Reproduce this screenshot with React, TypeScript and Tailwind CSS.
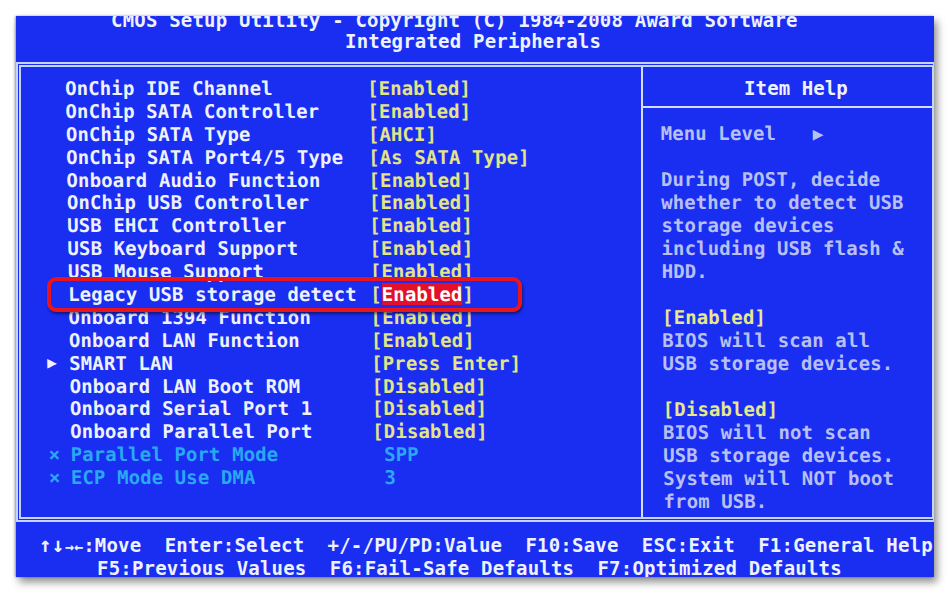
import React from "react";

type Row = { m?: string; l: string; v: string; dis?: boolean; hl?: boolean };

const rows: Row[] = [
  { l: "OnChip IDE Channel", v: "[Enabled]" },
  { l: "OnChip SATA Controller", v: "[Enabled]" },
  { l: "OnChip SATA Type", v: "[AHCI]" },
  { l: "OnChip SATA Port4/5 Type", v: "[As SATA Type]" },
  { l: "Onboard Audio Function", v: "[Enabled]" },
  { l: "OnChip USB Controller", v: "[Enabled]" },
  { l: "USB EHCI Controller", v: "[Enabled]" },
  { l: "USB Keyboard Support", v: "[Enabled]" },
  { l: "USB Mouse Support", v: "[Enabled]" },
  { l: "Legacy USB storage detect", v: "[Enabled]", hl: true },
  { l: "Onboard 1394 Function", v: "[Enabled]" },
  { l: "Onboard LAN Function", v: "[Enabled]" },
  { m: "▶", l: "SMART LAN", v: "[Press Enter]" },
  { l: "Onboard LAN Boot ROM", v: "[Disabled]" },
  { l: "Onboard Serial Port 1", v: "[Disabled]" },
  { l: "Onboard Parallel Port", v: "[Disabled]" },
  { m: "×", l: "Parallel Port Mode", v: " SPP", dis: true },
  { m: "×", l: "ECP Mode Use DMA", v: " 3", dis: true },
];

type HelpLine = { t: string; y?: boolean; arrow?: boolean };
const help: HelpLine[] = [
  { t: "Menu Level   ", arrow: true },
  { t: " " },
  { t: "During POST, decide" },
  { t: "whether to detect USB" },
  { t: "storage devices" },
  { t: "including USB flash &" },
  { t: "HDD." },
  { t: " " },
  { t: "[Enabled]", y: true },
  { t: "BIOS will scan all" },
  { t: "USB storage devices." },
  { t: " " },
  { t: "[Disabled]", y: true },
  { t: "BIOS will not scan" },
  { t: "USB storage devices." },
  { t: "System will NOT boot" },
  { t: "from USB." },
];

export default function App() {
  return (
    <div className="relative w-[950px] h-[593px] bg-white overflow-hidden font-['DejaVu_Sans_Mono',monospace] font-bold text-[19px] tracking-[0.1px]">
      <div className="ml-[16px] mt-[16px] w-[918px] h-[561px] bg-[#1a2ef2] flex flex-col overflow-hidden shadow-[3px_5px_8px_rgba(0,0,0,0.45),-1px_0_2px_rgba(0,0,0,0.35)]">
        {/* header */}
        <div className="h-[46px] shrink-0 overflow-hidden text-[#eef2ff] leading-[21px] whitespace-pre tracking-[0.2px]">
          <div className="-mt-[6px] pl-[95px]">CMOS Setup Utility - Copyright (C) 1984-2008 Award Software</div>
          <div className="pl-[329px]">Integrated Peripherals</div>
        </div>

        {/* main box */}
        <div className="h-[460px] shrink-0 flex border-double border-[#c4d4ff] border-t-[5px] border-b-[5px] border-l-[5px] border-r-2">
          {/* left panel */}
          <div className="w-[620px] pt-[10px] pl-[25px]">
            <div className="skew-x-[0.85deg] leading-[22.9px] whitespace-pre">
              {rows.map((r, i) => (
                <div key={i} className="flex h-[22.9px]">
                  <div className={`w-[22px] ${r.dis ? "text-[#2aa8f4]" : "text-[#eef2ff]"} ${r.m === "▶" ? "text-[16px]" : ""}`}>
                    {r.m ?? ""}
                  </div>
                  <div className={`w-[302px] ${r.dis ? "text-[#2aa8f4]" : "text-[#eef2ff]"}`}>{r.l}</div>
                  <div className={r.dis ? "text-[#2aa8f4]" : "text-[#e4e488]"}>
                    {r.hl ? (
                      <>
                        [<span className="bg-[#e3102a] text-white inline-block h-[22px] leading-[22px]">Enabled</span>]
                      </>
                    ) : (
                      r.v
                    )}
                  </div>
                </div>
              ))}
            </div>
          </div>
          {/* divider */}
          <div className="w-[2px] bg-[#d4defe]" />
          {/* right panel */}
          <div className="w-[289px] flex flex-col">
            <div className="h-[41px] pt-[10px] pl-[17px] text-center text-[#eef2ff] leading-[23px] border-b-2 border-[#d4defe]">
              Item Help
            </div>
            <div className="pt-[14px] pl-[19px] leading-[23px] whitespace-pre skew-x-[0.45deg]">
              {help.map((h, i) => (
                <div key={i} className={`h-[23px] ${h.y ? "text-[#e8e88c]" : "text-[#b8c0f2]"}`}>
                  {h.t}
                  {h.arrow ? <span className="text-[18px] leading-[0] pl-[2px]">▶</span> : null}
                </div>
              ))}
            </div>
          </div>
        </div>

        {/* footer */}
        <div className="h-[55px] shrink-0 pt-[12px] text-[#eef2ff] leading-[23px] whitespace-pre tracking-[0.2px]">
          <div className="h-[23px] pl-[23px]">
            <span className="text-[21px] leading-[0]">↑↓</span>
            <span className="text-[15px] leading-[0]">→←</span>:Move  Enter:Select  +/-/PU/PD:Value  F10:Save  ESC:Exit  F1:General Help
          </div>
          <div className="h-[23px] pl-[81px]">F5:Previous Values  F6:Fail-Safe Defaults  F7:Optimized Defaults</div>
        </div>
      </div>

      {/* red annotation box */}
      <div className="absolute left-[47px] top-[277px] w-[475px] h-[35px] border-[4px] border-[#e8141e] rounded-[9px] shadow-[1px_2px_3px_rgba(0,0,0,0.5)]" />
    </div>
  );
}
